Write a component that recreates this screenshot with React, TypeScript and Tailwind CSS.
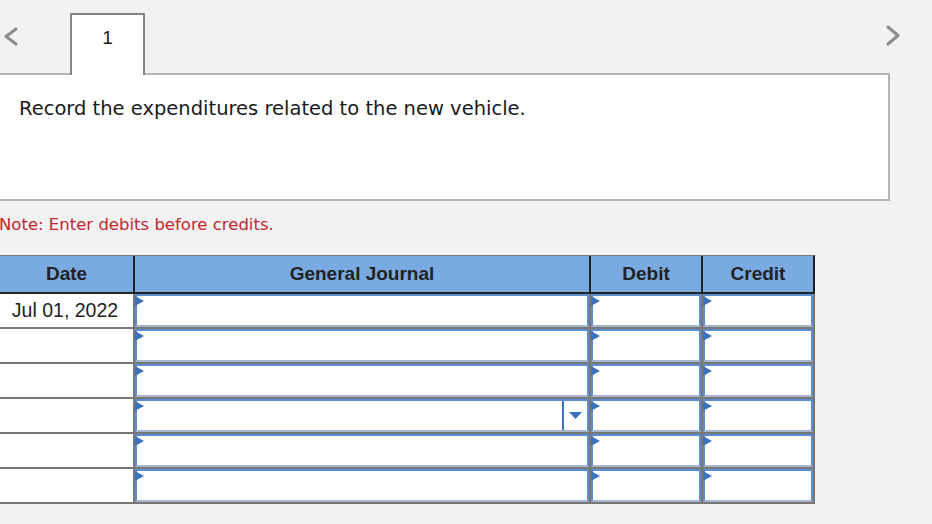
import React from 'react';

const arial = { fontFamily: '"Liberation Sans", Arial, sans-serif' };
const verdana = { fontFamily: '"DejaVu Sans", Verdana, sans-serif' };

function Flag() {
  return (
    <svg className="absolute -left-[2px] top-0" width="9" height="10" viewBox="0 0 9 10">
      <polygon points="0,0 9,5 0,10" fill="#3b73bb" />
    </svg>
  );
}

function InputCell({ dropdown = false }: { dropdown?: boolean }) {
  return (
    <div className="relative bg-white border-2 border-[#5b8dd0] border-b-[#a7b6cc] flex justify-end">
      <Flag />
      {dropdown && (
        <div className="w-[25px] border-l-2 border-[#3b73bb] flex items-center justify-center">
          <svg width="13" height="7" viewBox="0 0 13 7">
            <polygon points="0,0 13,0 6.5,7" fill="#3b73bb" />
          </svg>
        </div>
      )}
    </div>
  );
}

const rows = ['Jul 01, 2022', '', '', '', '', ''];

export default function App() {
  return (
    <div className="min-h-screen w-[932px] h-[524px] bg-[#f2f2f2] overflow-hidden">
      {/* Tabs */}
      <div className="relative z-10 h-[75px] -mb-[2px] flex items-start">
        <div className="w-[70px] pt-[27px] pl-[3px]">
          <svg width="15" height="19" viewBox="0 0 15 19">
            <polyline points="13,2 3,9.5 13,17" fill="none" stroke="#8c8c8c" strokeWidth="3" strokeLinecap="round" strokeLinejoin="round" />
          </svg>
        </div>
        <div
          className="mt-[13px] w-[75px] h-[62px] bg-white border-2 border-b-0 border-[#858585] flex justify-center pt-[13px] text-[19px] text-[#222] leading-none"
          style={arial}
        >
          1
        </div>
        <div className="ml-[741px] pt-[25px]">
          <svg width="15" height="21" viewBox="0 0 15 21">
            <polyline points="2,2 12,10.5 2,19" fill="none" stroke="#8c8c8c" strokeWidth="3" strokeLinecap="round" strokeLinejoin="round" />
          </svg>
        </div>
      </div>

      {/* Question box */}
      <div
        className="-ml-[2px] w-[892px] h-[128px] bg-white border-2 border-[#b4b4b4] pl-[19px] pt-[19px] text-[19.5px] text-[#1a1a1a]"
        style={verdana}
      >
        Record the expenditures related to the new vehicle.
      </div>

      <div className="mt-[14px] -ml-[1px] text-[16.5px] leading-[20px] text-[#c1272d]" style={verdana}>
        Note: Enter debits before credits.
      </div>

      {/* Journal table */}
      <div className="mt-[20px] w-[815px]" style={arial}>
        <div className="grid grid-cols-[133px_454px_110px_110px] gap-x-[2px] bg-[#222] border-t border-t-[#777] border-b-2 border-b-[#222] border-r-2 border-r-[#222] text-[19px] font-bold text-[#222]">
          {['Date', 'General Journal', 'Debit', 'Credit'].map((h) => (
            <div key={h} className="h-[36px] bg-[#79abe2] flex items-center justify-center">
              {h}
            </div>
          ))}
        </div>
        <div className="grid grid-cols-[133px_454px_110px_110px] auto-rows-[33px] gap-[2px] bg-[#777] border-b-2 border-r-2 border-[#777]">
          {rows.map((d, i) => (
            <React.Fragment key={i}>
              <div className="bg-white flex items-center justify-center pr-[3px] text-[19.5px] text-[#222]">{d}</div>
              <InputCell dropdown={i === 3} />
              <InputCell />
              <InputCell />
            </React.Fragment>
          ))}
        </div>
      </div>
    </div>
  );
}
